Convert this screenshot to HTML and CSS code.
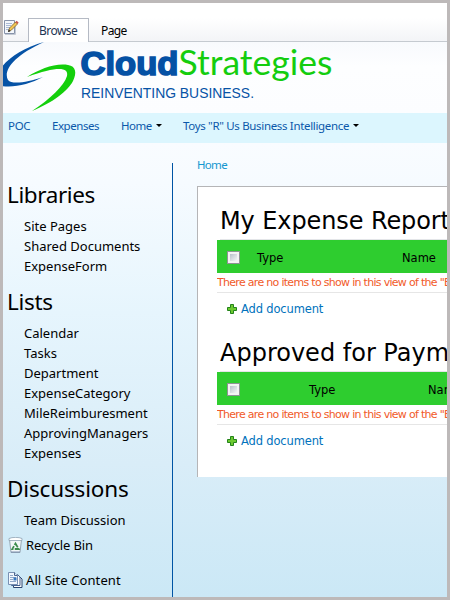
FILE: index.html
```html
<!DOCTYPE html>
<html lang="en">
<head>
<meta charset="utf-8">
<title>Home</title>
<link rel="stylesheet" href="styles.css">
</head>
<body>
<div class="page">
  <div class="ribbon">
    <svg class="edit-icon" width="16" height="16" viewBox="0 0 16 16">
      <path d="M1.5 1.5h10v13h-10z" fill="#f4f7fb" stroke="#8793aa"/>
      <path d="M2 15.5h10.500V3" fill="none" stroke="#c3c9d3"/>
      <path d="M3 4.500h6M3 6.500h5M3 8.500h4M3 10.500h3" stroke="#a9b9d6"/>
      <path d="M5.500 12.500l1-3.500 6-6 2 2-6 6z" fill="#f3c552" stroke="#7a6331" stroke-width=".8"/>
      <path d="M12.300 3l1.400-1.300 2 2L14.400 5z" fill="#c9544b"/>
      <path d="M5 13l.8-2.500 1.700 1.700z" fill="#222"/>
    </svg>
    <div class="tab active"><span class="t-browse">Browse</span></div>
    <div class="tab"><span class="t-page">Page</span></div>
  </div>
  <div class="header">
    <svg class="logo" width="340" height="71" viewBox="3 42 340 71">
      <path d="M44 42C25 47 8 58 2 67V86C14 88 30 84 43 77C28 82 12 85 8 80C3 71 13 56 44 42Z" fill="#0653a6"/>
      <path d="M27 77C40 69 55 63 68 65C76 66 77 73 73 81C68 91 52 103 32 111C50 99 64 86 67 76C69 67 57 66 27 77Z" fill="#14cf0c"/>
      <text class="cloud" x="80.500" y="75" textLength="98" lengthAdjust="spacingAndGlyphs">Cloud</text>
      <text class="strategies" x="178.500" y="75" textLength="154" lengthAdjust="spacingAndGlyphs">Strategies</text>
      <text class="slogan" x="81" y="97.500" textLength="173" lengthAdjust="spacingAndGlyphs">REINVENTING BUSINESS.</text>
    </svg>
  </div>
  <div class="nav">
    <a class="n-poc">POC</a>
    <a class="n-exp">Expenses</a>
    <a class="n-home">Home<i class="caret"></i></a>
    <a class="n-toys">Toys "R" Us Business Intelligence<i class="caret"></i></a>
  </div>
  <div class="body">
    <div class="sidebar">
      <h2 class="libraries">Libraries</h2>
      <ul>
        <li>Site Pages</li>
        <li>Shared Documents</li>
        <li>ExpenseForm</li>
      </ul>
      <h2 class="lists">Lists</h2>
      <ul>
        <li>Calendar</li>
        <li>Tasks</li>
        <li>Department</li>
        <li>ExpenseCategory</li>
        <li>MileReimburesment</li>
        <li>ApprovingManagers</li>
        <li>Expenses</li>
      </ul>
      <h2 class="discussions">Discussions</h2>
      <ul>
        <li>Team Discussion</li>
      </ul>
      <div class="tool">
        <svg width="16" height="16" viewBox="0 0 16 16">
          <path d="M1.500 2.500h12l-1.500 13H3z" fill="#f3f7f9" stroke="#96a7b4"/>
          <path d="M1 1.500c3-1.500 10-1.500 13 0v2H1z" fill="#fff" stroke="#8fa2b3" stroke-width=".8"/>
          <path d="M3 14.500h9v1H3z" fill="#7b8faf"/>
          <path d="M7.500 6.500L10.700 12H4.300z" fill="none" stroke="#3d8c4d" stroke-width="1.800" stroke-dasharray="4.500 1.300"/>
        </svg>
        <span>Recycle Bin</span>
      </div>
      <div class="tool all">
        <svg width="16" height="16" viewBox="0 0 16 16">
          <path d="M5.500 4.500h6l2.500 2.500v8.500H5.500z" fill="#fff" stroke="#29446f"/>
          <path d="M3.500 2.500h6L12 5v8.500H3.500z" fill="#fff" stroke="#44618f"/>
          <path d="M.5.5h6L9.500 3.500v9H.5z" fill="#f3f8fe" stroke="#7990b3"/>
          <path d="M6.500.5v3h3" fill="#dce8f5" stroke="#49658e"/>
          <path d="M2 3.500h3M2 5.500h6M2 7.500h3M2 9.500h6" stroke="#91a9c9"/>
          <path d="M5.500 5.500h3v3h-3z" fill="#3977bd"/>
        </svg>
        <span>All Site Content</span>
      </div>
    </div>
    <div class="main">
      <div class="crumb"><span>Home</span></div>
      <div class="panel">
        <div class="webpart">
          <h3 class="w1">My Expense Report</h3>
          <div class="cols first"><i class="check"></i><span class="c-type">Type</span><span class="c-name">Name</span></div>
          <div class="empty">There are no items to show in this view of the "E</div>
          <div class="add"><svg width="10" height="10" viewBox="0 0 10 10"><path d="M3.500.5h3v3h3v3h-3v3h-3v-3h-3v-3h3z" fill="#6cc92f" stroke="#23831b"/></svg><span>Add document</span></div>
        </div>
        <div class="webpart">
          <h3 class="w2">Approved for Paym</h3>
          <div class="cols second"><i class="check"></i><span class="c-type">Type</span><span class="c-name">Name</span></div>
          <div class="empty">There are no items to show in this view of the "E</div>
          <div class="add"><svg width="10" height="10" viewBox="0 0 10 10"><path d="M3.500.5h3v3h3v3h-3v3h-3v-3h-3v-3h3z" fill="#6cc92f" stroke="#23831b"/></svg><span>Add document</span></div>
        </div>
      </div>
    </div>
  </div>
</div>
</body>
</html>
```
FILE: styles.css
```css
* { box-sizing: border-box; }
body { margin: 0; font-family: "Noto Sans", "Open Sans", sans-serif; color: #000; }
h2, h3, ul { margin: 0; padding: 0; font-weight: 400; }
ul { list-style: none; }
svg { display: block; flex: none; }
.page {
  width: 450px; height: 600px; overflow: hidden;
  border: 3px solid #bdb9b9;
  display: flex; flex-direction: column;
  background: linear-gradient(#fff 0, #fcfdff 100px, #f6fbff 180px, #e6f5fd 310px, #d9edf8 460px, #cbe8f6 100%);
}
.ribbon {
  height: 39px; flex: none; display: flex; align-items: flex-end;
  border-bottom: 1px solid #c5cad0;
  background: linear-gradient(#fff 40%, #f3f4f7);
}
.edit-icon { margin: 0 9px 6px 0; }
.tab { height: 24px; line-height: 27px; font-size: 12px; padding-left: 12px; white-space: nowrap; }
.tab.active {
  width: 61px; height: 24px; margin-bottom: -1px; padding-left: 10px; line-height: 24px;
  border: 1px solid #b5bac4; border-bottom: 0; background: #fff; color: #1d3553;
}
.t-browse { letter-spacing: -.55px; }
.t-page { letter-spacing: -.6px; }
.header { height: 71px; flex: none; background: linear-gradient(#f8fafd, #fdfeff 35%, #fcfdff); }
.cloud { font: 700 33px "Liberation Sans", sans-serif; fill: #0551a4; stroke: #0551a4; stroke-width: 1.6px; }
.strategies { font: 400 34.5px Lato, sans-serif; fill: #14cd0e; }
.slogan { font: 14.5px "Liberation Sans", sans-serif; fill: #0753a6; }
.nav {
  height: 30px; flex: none; background: #dcf6fe; display: flex; padding-left: 5px;
  font-size: 11.5px; line-height: 25px; color: #0b58aa; white-space: nowrap;
}
.n-poc { width: 44px; letter-spacing: -.3px; }
.n-exp { width: 69px; letter-spacing: -.45px; }
.n-home { width: 62px; letter-spacing: -.5px; }
.n-toys { letter-spacing: -.33px; }
.caret {
  display: inline-block; width: 0; height: 0; margin-left: 4px; vertical-align: 3px;
  border: 3px solid transparent; border-top-color: #000; border-bottom: 0;
}
.body { flex: 1; display: flex; min-height: 0; }
.sidebar {
  width: 170px; padding: 36px 0 0 5px;
  background: linear-gradient(#0054a4, #0054a4) right 20px / 1px 100% no-repeat;
}
.sidebar h2 { margin-left: -1px; font-size: 22.5px; line-height: 32px; letter-spacing: -.4px; }
.sidebar h2 + ul { padding: 5px 0 0 16px; }
.sidebar li { height: 20px; line-height: 20px; font-size: 13px; }
.sidebar .lists { margin-top: 10px; letter-spacing: -.3px; }
.sidebar .lists + ul { padding-top: 5px; }
.sidebar .discussions { margin-top: 10px; letter-spacing: -.15px; }
.tool { display: flex; align-items: center; gap: 2px; height: 20px; margin-top: 5px; font-size: 13px; line-height: 20px; letter-spacing: -.15px; }
.tool.all { margin-top: 15px; letter-spacing: .1px; }
.main { flex: 1; min-width: 0; padding-left: 24px; }
.crumb { height: 43px; padding-top: 12px; font-size: 11.5px; line-height: 20px; color: #1597cf; letter-spacing: -.7px; }
.panel {
  height: 291px; padding-top: 20px; background: #fff; overflow: hidden;
  border-top: 1px solid #b5b5b7; border-left: 1px solid #b5b5b7;
  font-family: "DejaVu Sans", sans-serif;
}
.webpart { height: 132px; padding-left: 19px; white-space: nowrap; }
.webpart h3 { height: 33px; margin-left: 3px; font-size: 24px; line-height: 28px; border-bottom: 1px solid #e3e5e8; }
.webpart .w1 { letter-spacing: -.1px; }
.cols { height: 33px; background: #2ecd2f; display: flex; align-items: center; padding-left: 10px; font-size: 11.5px; line-height: 16px; padding-top: 3px; }
.check { width: 13px; height: 13px; margin-top: -1px; flex: none; border: 1px solid #8e9294; background: linear-gradient(135deg, #b9c1ca, #f5f7f8) content-box, #f4f4f4; padding: 2px; }
.c-type { margin-left: 17px; flex: none; width: 145px; }
.second .c-type { margin-left: 69px; width: 119px; }
.empty { height: 20px; line-height: 19px; font-size: 11px; letter-spacing: -.7px; color: #f15a29; border-bottom: 1px solid #e6e6e6; overflow: hidden; }
.add { display: flex; align-items: center; gap: 4px; height: 32px; padding-left: 10px; font-size: 11.5px; letter-spacing: -.15px; color: #0072bc; }
```
